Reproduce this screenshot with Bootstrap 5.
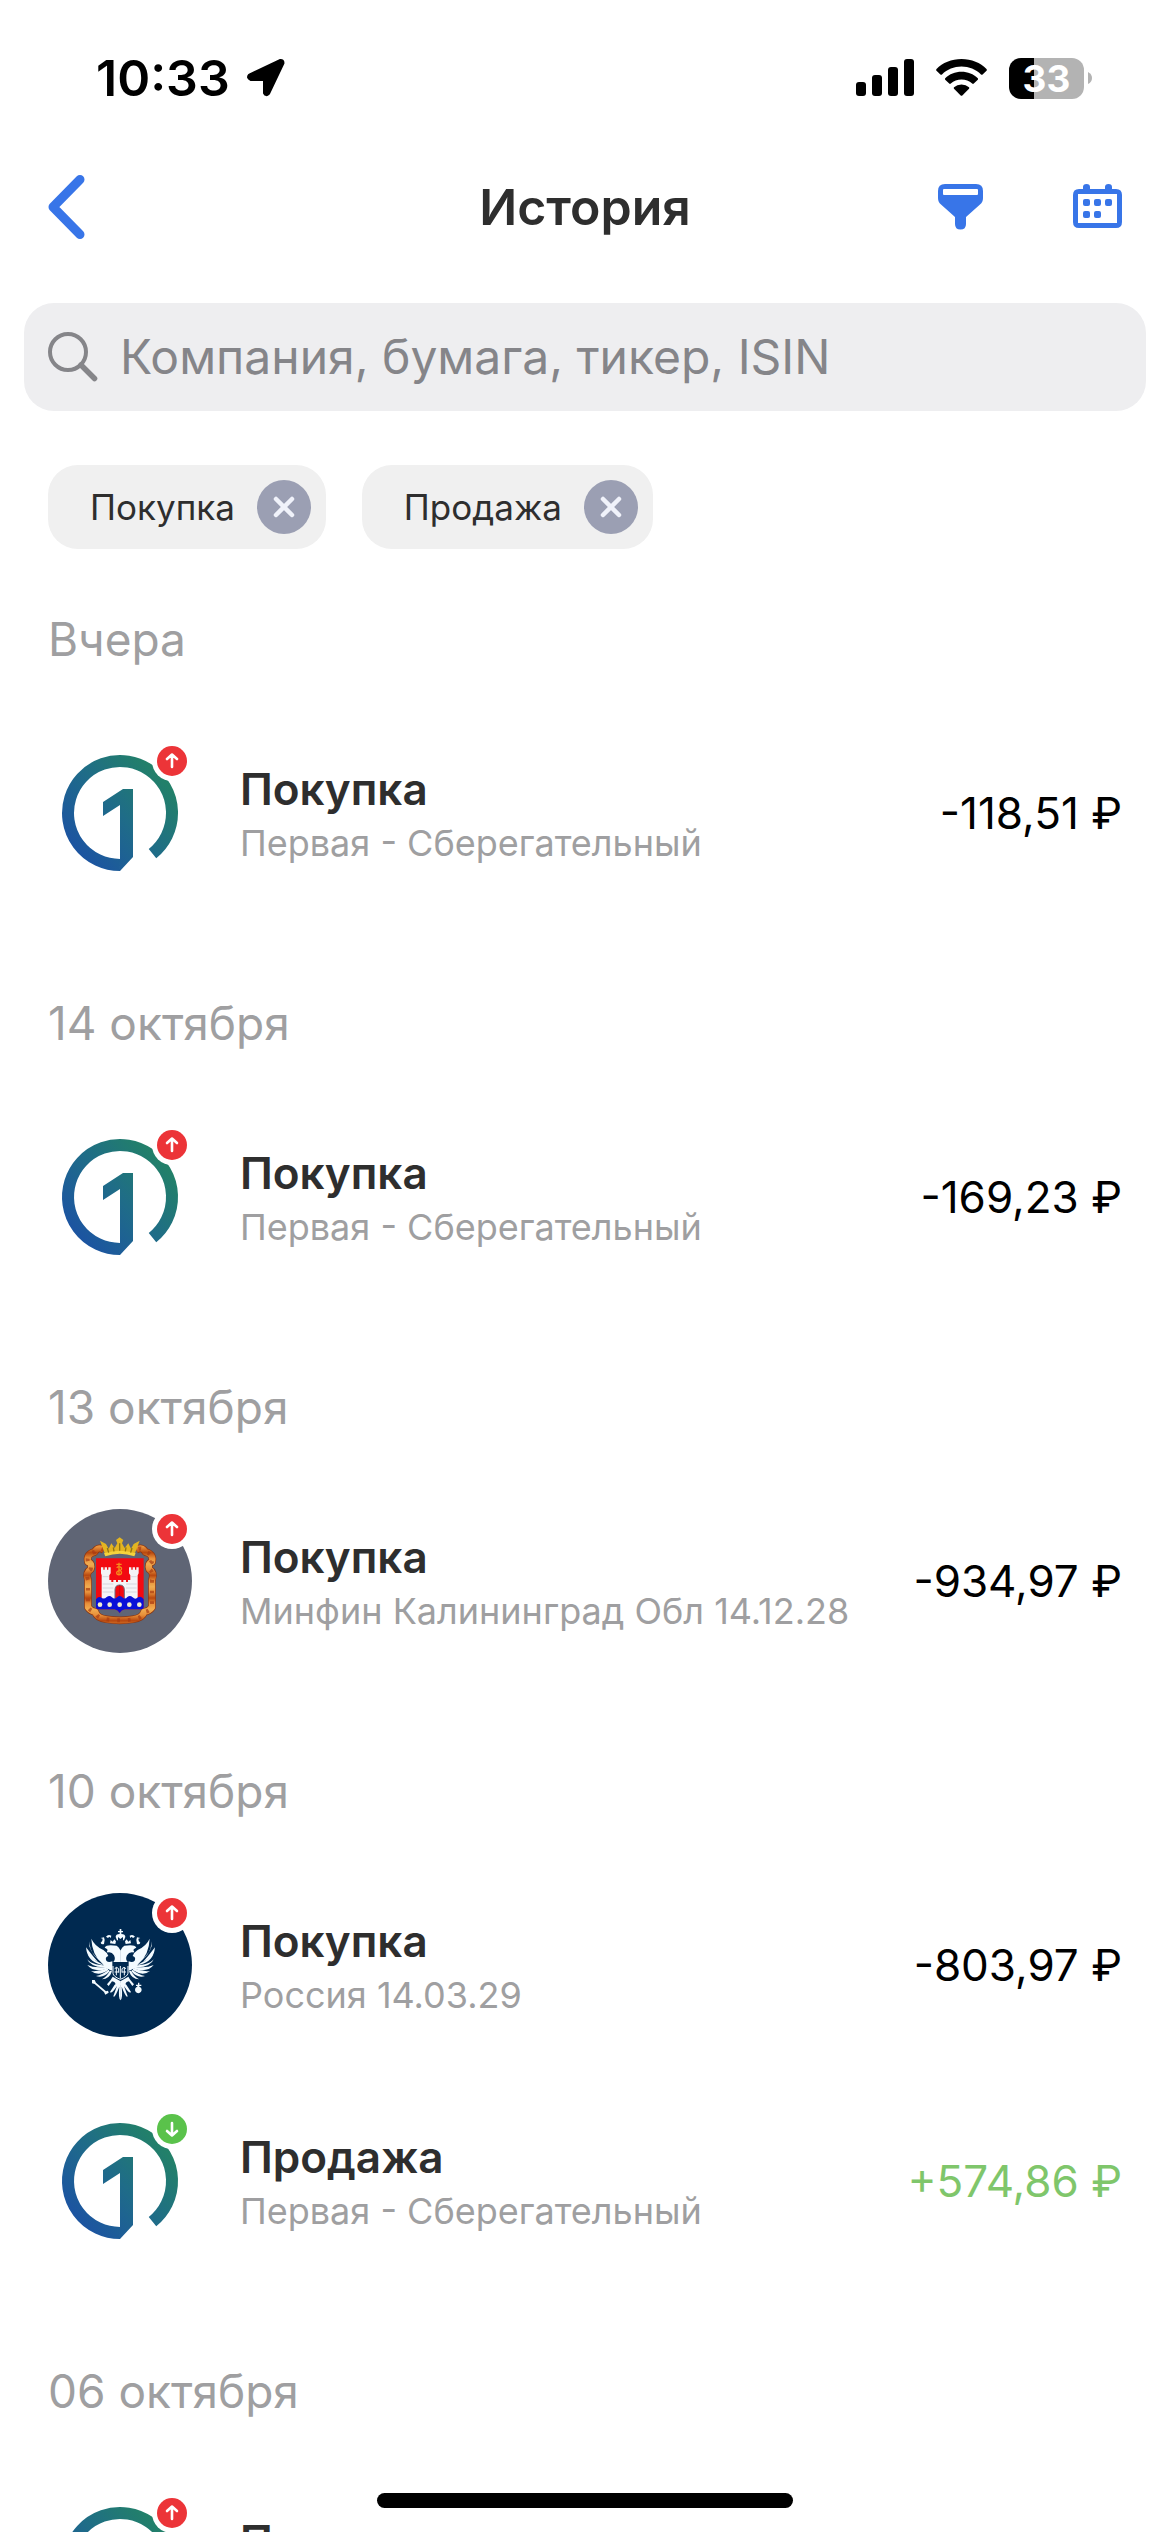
<!DOCTYPE html>
<html lang="ru">
<head>
<meta charset="utf-8">
<meta name="viewport" content="width=device-width, initial-scale=1">
<title>История</title>
<link href="https://cdn.jsdelivr.net/npm/bootstrap@5.3.0/dist/css/bootstrap.min.css" rel="stylesheet">
<style>
  body { font-family: Inter, "Noto Sans", sans-serif; background: #fff; color: #2e2e2e; }
  svg { display: block; flex: none; }
  .text-xl { font-size: 50px; line-height: 60px; }
  .text-search { font-size: 48px; line-height: 60px; }
  .text-lg { font-size: 46px; line-height: 60px; }
  .text-md { font-size: 44px; line-height: 54px; }
  .text-sm { font-size: 36px; line-height: 54px; }
  .text-chip { font-size: 35px; line-height: 54px; }
  .ink { color: #2e2e2e; }
  .muted { color: #9f9fa1; }

  .status-bar { height: 156px; padding: 0 78px 0 96px; color: #000; }
  .status-icons { gap: 22px; }
  .battery { width: 75px; height: 41px; border-radius: 12px; font-size: 37px; line-height: 41px;
             color: #fff; background: linear-gradient(90deg, #000 33%, #b3b3b3 33%); }

  .top-nav { display: grid; grid-template-columns: 1fr auto 1fr; align-items: center; height: 102px; padding: 0 48px; }
  .icon-btn { padding: 0; border: 0; background: none; color: #3875e8; }
  .nav-actions { gap: 90px; }

  .search-box { height: 108px; margin: 45px 24px 54px; padding: 0 24px; gap: 22px; border-radius: 30px;
                background: #eeeef0; color: #858589; }
  .search-box input { border: 0; padding: 0; background: none; outline: 0; color: #2e2e2e; min-width: 0; }
  .search-box input::placeholder { color: #858589; opacity: 1; }

  .filter-chips { padding: 0 48px; gap: 36px; }
  .filter-chip { height: 84px; padding: 0 15px 0 42px; gap: 22px; border-radius: 30px; background: #f0f0f0; }
  .chip-close { width: 54px; height: 54px; padding: 0; border: 0; border-radius: 50%; background: #9b9fb3; color: #f0f2fa; }

  .history { min-height: 0; padding: 0 48px; }
  .day-title { margin: 0; padding: 72px 0 36px; font-weight: 400; }
  .history section:first-child .day-title { padding-top: 60px; }
  .operation { height: 216px; gap: 48px; }
  .avatar { width: 144px; height: 144px; }
  .direction { top: 0; right: 0; }
  .operation-text { padding-top: 6px; }
  .amount { color: #000; }
  .amount-in { color: #7fc66b; }

  .home-indicator { bottom: 24px; width: 416px; height: 15px; border-radius: 8px; background: #000; }
</style>
</head>
<body>

<!-- Shared drawings -->
<svg width="0" height="0" class="position-absolute" aria-hidden="true">
  <defs>
    <linearGradient id="first-grad" gradientUnits="userSpaceOnUse" x1="34" y1="112" x2="116" y2="40">
      <stop offset="0" stop-color="#1c55a0"/><stop offset=".5" stop-color="#1f6c88"/><stop offset="1" stop-color="#228069"/>
    </linearGradient>
    <linearGradient id="ribbon-grad" x1="0" y1="0" x2="0" y2="34" gradientUnits="userSpaceOnUse" spreadMethod="reflect">
      <stop offset="0" stop-color="#b8480f"/><stop offset=".5" stop-color="#e8903a"/><stop offset="1" stop-color="#f0ac50"/>
    </linearGradient>
    <path id="ribbon" d="M84 60Q66 48 56 66Q30 72 36 96Q50 100 44 118Q28 128 36 150V232Q44 244 58 246Q62 264 92 268Q131 274 170 268Q200 264 204 246Q220 244 228 232V150Q236 128 220 118Q214 100 228 96Q234 72 208 66Q198 48 180 60"/>

    <symbol id="logo-first" viewBox="0 0 144 144">
      <path d="M72 124A52 52 0 1 1 104.500 112.600" fill="none" stroke="url(#first-grad)" stroke-width="12"/>
      <path d="M55 61 75 48H85V116L72 130V64L55 75Z" fill="url(#first-grad)"/>
    </symbol>

    <symbol id="logo-kaliningrad" viewBox="0 0 144 144">
      <circle cx="72" cy="72" r="72" fill="#5f6575"/>
      <g transform="translate(28 21) scale(.3333)">
        <!-- ribbon -->
        <g fill="none" stroke-linejoin="round">
          <use href="#ribbon" stroke="#8d3510" stroke-width="23"/>
          <use href="#ribbon" stroke="url(#ribbon-grad)" stroke-width="19"/>
          <use href="#ribbon" stroke="#a83a12" stroke-width="12" stroke-dasharray="8 24" opacity=".7"/>
        </g>
        <!-- crown -->
        <path d="M88 74 72 32 90 42 98 56 106 40 116 54 124 40 120 30 131 22 142 30 138 40 146 54 157 40 165 56 173 42 191 32 175 74Q131 60 88 74Z" fill="#e3b521"/>
        <path d="M84 70Q131 54 179 70L175 79Q131 64 88 79Z" fill="#f5d33c"/>
        <path d="M98 68 94 54M114 64 112 52M131 62V40M148 64 150 52M164 68 168 54" stroke="#8f7412" stroke-width="4" fill="none"/>
        <!-- shield -->
        <path d="M60 85H203V232Q203 238 196 238H146Q136 240 131 249Q126 240 116 238H67Q60 238 60 232Z" fill="#f20a12"/>
        <path d="M75 112H82V119H86V112H93V119H97V112H104V130L100 136V150H106V156H112V150H120V156H126V150H136V156H142V150H150V156H156V150H163V136L159 130V112H166V119H170V112H177V119H181V112H188V130L185 136V210H77V136L75 130Z" fill="#f4f4f7"/>
        <path d="M80 140H98M80 162H112M80 174H112M80 186H112M150 162H182M150 174H182M150 186H182M166 140H182" stroke="#c8c8d0" stroke-width="2"/>
        <path d="M117 210V180Q117 165 131 165Q145 165 145 180V210Z" fill="#f20a12" stroke="#6a6a80" stroke-width="3"/>
        <path d="M131 165V210" stroke="#c00a12" stroke-width="2"/>
        <path d="M129 98V134M121 103H137M122 113Q129 107 136 113Q139 120 129 122Q119 126 123 132Q129 138 136 131Q139 124 129 120" fill="none" stroke="#f58b1a" stroke-width="4"/>
        <path d="M60 208Q67 198 74 202Q84 210 92 201Q101 194 108 202Q116 210 124 201Q131 194 139 202Q147 210 154 201Q162 194 170 202Q178 210 186 202Q196 196 203 208V232Q203 238 196 238H146Q136 240 131 249Q126 240 116 238H67Q60 238 60 232Z" fill="#0a10d8"/>
        <g fill="#f5efce"><circle cx="72" cy="224" r="7"/><circle cx="101" cy="224" r="7"/><circle cx="131" cy="224" r="7"/><circle cx="160" cy="224" r="7"/><circle cx="190" cy="224" r="7"/></g>
      </g>
    </symbol>

    <g id="eagle-half">
      <path d="M134 96 134 126H112Q120 118 114 106Q108 96 98 97Q90 98 94 92Q97 88 86 83Q90 76 104 76L122 77Q128 80 134 92Z"/>
      <path d="M46 56Q56 78 82 90Q92 96 97 108Q86 112 91 122Q97 129 109 124V152Q92 150 78 130Q48 104 46 56Z"/>
      <path d="M40 64Q34 92 74 122L88 128Q42 112 40 64Z"/>
      <path d="M32 87Q38 116 82 134L76 134Q34 124 32 87Z"/>
      <path d="M30 82Q30 110 66 126Q48 106 30 82Z"/>
      <path d="M30 112Q42 136 92 136L88 142Q44 144 30 112Z"/>
      <path d="M34 135Q56 146 94 140L92 147Q52 158 34 135Z"/>
      <path d="M45 153Q68 156 96 144L96 151Q66 170 45 153Z"/>
      <path d="M60 168Q80 164 98 149L101 154Q82 176 60 168Z"/>
      <path d="M78 178Q92 170 102 152L108 154Q100 178 78 178Z"/>
      <path d="M84 72Q76 74 74 68Q80 66 80 56L74 54 84 52 86 60Z"/>
      <path d="M90 50Q96 42 106 47L104 54 100 50 96 54ZM102 70 104 60 110 65 115 58 120 64 118 72Z"/>
      <path d="M110 170 134 184V194H118Q120 186 108 184L98 198 93 193 104 180Z"/>
      <path d="M134 190V241Q126 236 130 200Q116 236 112 229L123 198Q106 224 102 216L116 194Q124 188 134 190Z"/>
    </g>
    <symbol id="logo-russia" viewBox="0 0 144 144">
      <circle cx="72" cy="72" r="72" fill="#002950"/>
      <g transform="translate(28 27) scale(.3333)" fill="#f4fbff">
        <use href="#eagle-half"/>
        <use href="#eagle-half" transform="matrix(-1 0 0 1 267 0)"/>
        <path d="M131 27H136V33H141V37H136V42Q148 42 148 51L144 61H123L119 51Q119 42 131 42V37H126V33H131Z"/>
        <path d="M126 51 133 57 141 51V62H126Z" fill="#002950"/>
        <path d="M111 138V160Q112 170 133 178Q154 170 156 160V138M121 142V166M133 138V176M145 142V166M116 146Q122 138 128 146V158M138 158V146Q144 138 150 146M116 156H128M138 156H150" fill="none" stroke="#f4fbff" stroke-width="3"/>
        <path d="M48 180 56 180 60 188 90 214 96 212 98 218 88 224 84 216 56 192 48 190Z"/>
        <path d="M186 188H190V194H196V198H190V200A10 10 0 1 1 184 200V198H180V194H186Z"/>
      </g>
    </symbol>

    <symbol id="dir-up" viewBox="0 0 40 40">
      <circle cx="20" cy="20" r="20" fill="#fff"/><circle cx="20" cy="20" r="15" fill="#ec3438"/>
      <path d="M20 26V14M15 18 20 13.500 25 18" fill="none" stroke="#fff" stroke-width="2.600" stroke-linecap="round" stroke-linejoin="round"/>
    </symbol>
    <symbol id="dir-down" viewBox="0 0 40 40">
      <circle cx="20" cy="20" r="20" fill="#fff"/><circle cx="20" cy="20" r="15" fill="#5ac24b"/>
      <path d="M20 14V26M15 22 20 26.500 25 22" fill="none" stroke="#fff" stroke-width="2.600" stroke-linecap="round" stroke-linejoin="round"/>
    </symbol>
    <symbol id="cross" viewBox="0 0 54 54">
      <path d="M19 19 35 35M35 19 19 35" stroke="currentColor" stroke-width="4.500" stroke-linecap="round"/>
    </symbol>
  </defs>
</svg>

<div class="d-flex flex-column vh-100 overflow-hidden position-relative">

  <div class="status-bar d-flex flex-shrink-0 align-items-center justify-content-between">
    <div class="d-flex align-items-center gap-3">
      <span class="text-xl fw-semibold">10:33</span>
      <svg width="40" height="40" viewBox="0 0 40 40" aria-hidden="true"><path d="M3.500 17 34 2.500Q37 2 37 5L22.500 35.500Q20 38 18.500 35V21.500H5Q1 20 3.500 17Z" fill="#000" stroke="#000" stroke-width="3" stroke-linejoin="round"/></svg>
    </div>
    <div class="status-icons d-flex align-items-center">
      <svg width="58" height="38" viewBox="0 0 58 38" aria-hidden="true"><rect y="23" width="10" height="14" rx="3"/><rect x="16" y="16" width="10" height="21" rx="3"/><rect x="32" y="8" width="10" height="29" rx="3"/><rect x="48" width="10" height="37" rx="3"/></svg>
      <svg width="51" height="38" viewBox="0 0 51 38" aria-hidden="true">
        <path d="M25.500 0C35.500 0 44.500 3.800 50.500 10Q51.200 11 50.500 11.800L46.600 15.400Q45.800 16 45 15.400C39.800 10.400 33 7.600 25.500 7.600S11.200 10.400 6 15.400Q5.200 16 4.400 15.400L.5 11.800Q-.2 11 .5 10C6.500 3.800 15.500 0 25.500 0Z"/>
        <path d="M25.500 12.800C31.800 12.800 37.500 15.200 41.800 19.200Q42.400 20 41.800 20.800L37.800 24.600Q37 25.200 36.200 24.600C33.300 22 29.600 20.500 25.500 20.500S17.700 22 14.800 24.600Q14 25.200 13.200 24.600L9.200 20.800Q8.600 20 9.200 19.200C13.500 15.200 19.200 12.800 25.500 12.800Z"/>
        <path d="M25.500 25.500Q30 25.500 33 28.200Q33.600 29 33 29.800L26.300 36.500Q25.500 37.200 24.700 36.500L18 29.800Q17.400 29 18 28.200Q21 25.500 25.500 25.500Z"/>
      </svg>
      <div class="d-flex align-items-center">
        <div class="battery fw-bold text-center">33</div>
        <svg width="8" height="14" viewBox="0 0 8 14" aria-hidden="true"><path d="M4 1Q8 3 8 7T4 13Z" fill="#b3b3b3"/></svg>
      </div>
    </div>
  </div>

  <header class="top-nav flex-shrink-0">
    <button type="button" class="icon-btn text-start" aria-label="Назад">
      <svg width="38" height="64" viewBox="0 0 38 64"><path d="M32 4.500 5 32 32 59.500" fill="none" stroke="currentColor" stroke-width="9" stroke-linecap="round" stroke-linejoin="round"/></svg>
    </button>
    <h1 class="text-xl fw-semibold m-0">История</h1>
    <div class="nav-actions d-flex align-items-center justify-content-end">
      <button type="button" class="icon-btn" aria-label="Фильтр">
        <svg width="45" height="46" viewBox="0 0 45 46"><path fill="currentColor" fill-rule="evenodd" d="M7 0H38Q45 0 45 7V14Q45 18 42 20.500L28 33V40Q28 45.500 22.500 45.500T17 40V33L3 20.500Q0 18 0 14V7Q0 0 7 0ZM6 5Q5 5 5 6V10Q5 11 6 11H39Q40 11 40 10V6Q40 5 39 5Z"/></svg>
      </button>
      <button type="button" class="icon-btn" aria-label="Календарь">
        <svg width="49" height="46" viewBox="0 0 49 46" fill="currentColor"><path fill-rule="evenodd" d="M10 3Q10 0 13.500 0T17 3V5H32V3Q32 0 35.500 0T39 3V5H43Q49 5 49 11V38Q49 44 43 44H6Q0 44 0 38V11Q0 5 6 5H10ZM5 10V39H44V10Z"/><rect x="10" y="15" width="7" height="7" rx="2"/><rect x="21" y="15" width="7" height="7" rx="2"/><rect x="32" y="15" width="7" height="7" rx="2"/><rect x="10" y="27" width="7" height="7" rx="2"/><rect x="21" y="27" width="7" height="7" rx="2"/></svg>
      </button>
    </div>
  </header>

  <label class="search-box d-flex flex-shrink-0 align-items-center" for="search">
    <svg width="50" height="50" viewBox="0 0 50 50" aria-hidden="true"><circle cx="20" cy="20" r="18" fill="none" stroke="currentColor" stroke-width="4"/><path d="M33 33 46.500 46.500" stroke="currentColor" stroke-width="5.500" stroke-linecap="round"/></svg>
    <input id="search" type="text" class="text-search flex-grow-1" placeholder="Компания, бумага, тикер, ISIN">
  </label>

  <div class="filter-chips d-flex flex-shrink-0">
    <div class="filter-chip d-flex align-items-center"><span class="text-chip ink">Покупка</span><button type="button" class="chip-close" aria-label="Убрать фильтр Покупка"><svg width="54" height="54"><use href="#cross"/></svg></button></div>
    <div class="filter-chip d-flex align-items-center"><span class="text-chip ink">Продажа</span><button type="button" class="chip-close" aria-label="Убрать фильтр Продажа"><svg width="54" height="54"><use href="#cross"/></svg></button></div>
  </div>

  <main class="history flex-grow-1 overflow-hidden">
    <section>
      <h2 class="day-title text-lg muted">Вчера</h2>
      <div class="operation d-flex align-items-center">
        <div class="avatar position-relative flex-shrink-0"><svg width="144" height="144"><use href="#logo-first"/></svg><svg class="direction position-absolute" width="40" height="40"><use href="#dir-up"/></svg></div>
        <div class="operation-text flex-grow-1"><div class="text-md fw-semibold ink">Покупка</div><div class="text-sm muted">Первая - Сберегательный</div></div>
        <div class="amount text-md text-nowrap">-118,51 ₽</div>
      </div>
    </section>
    <section>
      <h2 class="day-title text-lg muted">14 октября</h2>
      <div class="operation d-flex align-items-center">
        <div class="avatar position-relative flex-shrink-0"><svg width="144" height="144"><use href="#logo-first"/></svg><svg class="direction position-absolute" width="40" height="40"><use href="#dir-up"/></svg></div>
        <div class="operation-text flex-grow-1"><div class="text-md fw-semibold ink">Покупка</div><div class="text-sm muted">Первая - Сберегательный</div></div>
        <div class="amount text-md text-nowrap">-169,23 ₽</div>
      </div>
    </section>
    <section>
      <h2 class="day-title text-lg muted">13 октября</h2>
      <div class="operation d-flex align-items-center">
        <div class="avatar position-relative flex-shrink-0"><svg width="144" height="144"><use href="#logo-kaliningrad"/></svg><svg class="direction position-absolute" width="40" height="40"><use href="#dir-up"/></svg></div>
        <div class="operation-text flex-grow-1"><div class="text-md fw-semibold ink">Покупка</div><div class="text-sm muted text-nowrap">Минфин Калининград Обл 14.12.28</div></div>
        <div class="amount text-md text-nowrap">-934,97 ₽</div>
      </div>
    </section>
    <section>
      <h2 class="day-title text-lg muted">10 октября</h2>
      <div class="operation d-flex align-items-center">
        <div class="avatar position-relative flex-shrink-0"><svg width="144" height="144"><use href="#logo-russia"/></svg><svg class="direction position-absolute" width="40" height="40"><use href="#dir-up"/></svg></div>
        <div class="operation-text flex-grow-1"><div class="text-md fw-semibold ink">Покупка</div><div class="text-sm muted">Россия 14.03.29</div></div>
        <div class="amount text-md text-nowrap">-803,97 ₽</div>
      </div>
      <div class="operation d-flex align-items-center">
        <div class="avatar position-relative flex-shrink-0"><svg width="144" height="144"><use href="#logo-first"/></svg><svg class="direction position-absolute" width="40" height="40"><use href="#dir-down"/></svg></div>
        <div class="operation-text flex-grow-1"><div class="text-md fw-semibold ink">Продажа</div><div class="text-sm muted">Первая - Сберегательный</div></div>
        <div class="amount amount-in text-md text-nowrap">+574,86 ₽</div>
      </div>
    </section>
    <section>
      <h2 class="day-title text-lg muted">06 октября</h2>
      <div class="operation d-flex align-items-center">
        <div class="avatar position-relative flex-shrink-0"><svg width="144" height="144"><use href="#logo-first"/></svg><svg class="direction position-absolute" width="40" height="40"><use href="#dir-up"/></svg></div>
        <div class="operation-text flex-grow-1"><div class="text-md fw-semibold ink">Покупка</div><div class="text-sm">&nbsp;</div></div>
      </div>
    </section>
  </main>

  <div class="home-indicator position-absolute start-50 translate-middle-x"></div>
</div>

<script src="https://cdn.jsdelivr.net/npm/bootstrap@5.3.0/dist/js/bootstrap.bundle.min.js"></script>
</body>
</html>
